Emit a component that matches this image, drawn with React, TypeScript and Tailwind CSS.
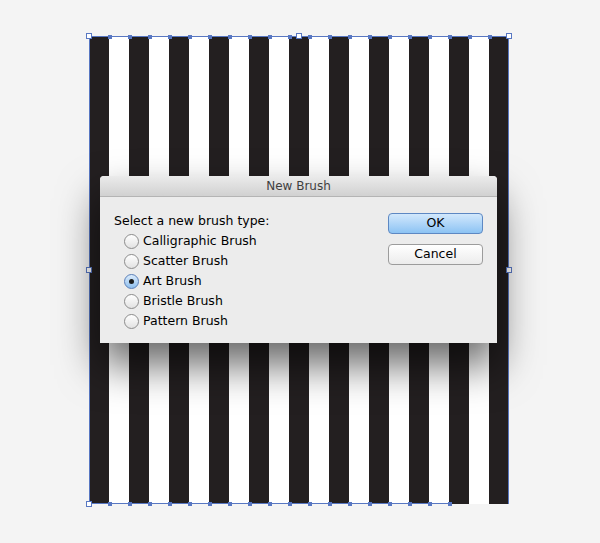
const BARS = Array.from({ length: 21 }, (_, i) => i);
const DOTS = Array.from({ length: 22 }, (_, i) => i);

const Radio = ({ checked }: { checked?: boolean }) => (
  <span
    className={
      checked
        ? "w-[15px] h-[15px] rounded-full border border-[#5a7fb8] bg-gradient-to-b from-[#dcecfb] to-[#8fbfee] flex items-center justify-center shrink-0"
        : "w-[15px] h-[15px] rounded-full border border-[#8c8c8c] bg-gradient-to-b from-white to-[#e2e2e2] shrink-0"
    }
  >
    {checked && <span className="w-[5px] h-[5px] rounded-full bg-[#1d1d1d]" />}
  </span>
);

const Handle = ({ className }: { className: string }) => (
  <div className={`absolute w-[6px] h-[6px] bg-white border border-[#5877c2] ${className}`} />
);

const options = [
  { label: "Calligraphic Brush" },
  { label: "Scatter Brush" },
  { label: "Art Brush", checked: true },
  { label: "Bristle Brush" },
  { label: "Pattern Brush" },
];

export default function App() {
  return (
    <div
      className="w-[600px] h-[543px] bg-[#f4f4f4] relative overflow-hidden pl-[89px] pt-[36px]"
      style={{ fontFamily: '"DejaVu Sans", "Liberation Sans", sans-serif' }}
    >
      {/* Artboard with stripes */}
      <div className="relative w-[420px] h-[468px]">
        <div className="flex h-full">
          {BARS.map((i) => (
            <div key={i} className={i % 2 === 0 ? "w-[20px] h-full bg-[#231f20]" : "w-[20px] h-full bg-white"} />
          ))}
        </div>

        {/* Selection box */}
        <div className="absolute inset-0 border-t border-l border-r border-[#5877c2]" />
        <div className="absolute left-0 bottom-0 w-[361px] h-px bg-[#5877c2]" />
        <div className="absolute left-[-1px] top-[-1px] flex gap-[16px]">
          {DOTS.map((i) => (
            <div key={i} className="w-[4px] h-[4px] bg-[#5877c2]" />
          ))}
        </div>
        <div className="absolute left-[-1px] bottom-[-2px] flex gap-[16px]">
          {DOTS.slice(0, 19).map((i) => (
            <div key={i} className="w-[4px] h-[4px] bg-[#5877c2]" />
          ))}
        </div>
        <Handle className="left-[-3px] top-[-3px]" />
        <Handle className="right-[-3px] top-[-3px]" />
        <Handle className="left-[-3px] bottom-[-3px]" />
        <Handle className="left-[207px] top-[-3px]" />
        <Handle className="left-[-3px] top-[231px]" />
        <Handle className="right-[-3px] top-[231px]" />
      </div>

      {/* Dialog */}
      <div className="absolute left-[100px] top-[176px] w-[397px] h-[167px] bg-[#ececec] rounded-t-[4px] shadow-[0_22px_42px_rgba(0,0,0,0.6)] flex flex-col">
        <div className="h-[21px] rounded-t-[4px] bg-gradient-to-b from-[#ebebeb] to-[#d1d1d1] border-b border-[#b4b4b4] flex items-center justify-center text-[12px] text-[#3f3f3f]">
          New Brush
        </div>
        <div className="flex flex-1 px-[14px] pt-[14px]">
          <div className="flex-1 flex flex-col text-[12.5px] text-[#000] leading-[20px]">
            <div>Select a new brush type:</div>
            {options.map((o) => (
              <div key={o.label} className="flex items-center gap-[4px] pl-[10px] h-[20px]">
                <Radio checked={o.checked} />
                <span>{o.label}</span>
              </div>
            ))}
          </div>
          <div className="flex flex-col gap-[10px] pt-[2px]">
            <button className="w-[95px] h-[21px] rounded-[4px] border border-[#5d88c3] bg-gradient-to-b from-[#d2e8fc] to-[#8cc3f3] text-[12.5px] text-black leading-none">
              OK
            </button>
            <button className="w-[95px] h-[21px] rounded-[4px] border border-[#9c9c9c] bg-gradient-to-b from-white to-[#ececec] text-[12.5px] text-black leading-none">
              Cancel
            </button>
          </div>
        </div>
      </div>
    </div>
  );
}
